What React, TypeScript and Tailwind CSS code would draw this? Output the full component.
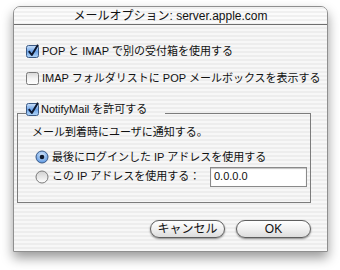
import React from 'react';

const font = "font-['Liberation_Sans','Noto_Sans_CJK_JP',sans-serif]";

const CheckBox: React.FC<{ checked?: boolean }> = ({ checked = false }) => (
  <svg width="14" height="14" viewBox="0 0 14 14" className="shrink-0">
    <defs>
      <linearGradient id="cbOn" x1="0" y1="0" x2="0" y2="1">
        <stop offset="0" stopColor="#cfe3fa" />
        <stop offset="0.5" stopColor="#6ea4e8" />
        <stop offset="1" stopColor="#b3d6f7" />
      </linearGradient>
      <linearGradient id="cbOff" x1="0" y1="0" x2="0" y2="1">
        <stop offset="0" stopColor="#d6d6d6" />
        <stop offset="0.5" stopColor="#f4f4f4" />
        <stop offset="1" stopColor="#ffffff" />
      </linearGradient>
    </defs>
    <rect x="0.5" y="1.5" width="12" height="12" rx="2" fill={checked ? 'url(#cbOn)' : 'url(#cbOff)'} stroke={checked ? '#3b5a86' : '#7a7a7a'} />
    {checked && <path d="M2.8 7.2 L5.8 11 L12 0.8" stroke="#0d1830" strokeWidth="2" fill="none" strokeLinejoin="round" />}
  </svg>
);

const Radio: React.FC<{ on?: boolean }> = ({ on = false }) => (
  <svg width="14" height="14" viewBox="0 0 14 14" className="shrink-0">
    <defs>
      <radialGradient id="rOn" cx="0.5" cy="0.35" r="0.7">
        <stop offset="0" stopColor="#d9eafc" />
        <stop offset="1" stopColor="#4f8fe0" />
      </radialGradient>
      <linearGradient id="rOff" x1="0" y1="0" x2="0" y2="1">
        <stop offset="0" stopColor="#d0d0d0" />
        <stop offset="1" stopColor="#ffffff" />
      </linearGradient>
    </defs>
    <circle cx="7" cy="7" r="6" fill={on ? 'url(#rOn)' : 'url(#rOff)'} stroke={on ? '#3b5a86' : '#7a7a7a'} />
    {on && <circle cx="7" cy="7" r="2.3" fill="#101a2c" />}
  </svg>
);

const Button: React.FC<{ label: string }> = ({ label }) => (
  <button className="w-[75px] h-[18px] rounded-full border border-[#5e5e5e] bg-[linear-gradient(to_bottom,#ffffff,#f0f0f0_50%,#dcdcdc)] shadow-[0_1px_2px_rgba(0,0,0,0.45)] text-[12px] leading-none text-[#111]">
    {label}
  </button>
);

export default function App() {
  return (
    <div className={`w-[340px] h-[270px] bg-white pt-[6px] pl-[13px] ${font}`}>
      <div className="w-[315px] h-[246px] flex flex-col rounded-t-[7px] border border-[#8f8f8f] shadow-[0_6px_12px_rgba(0,0,0,0.4)] overflow-hidden bg-[repeating-linear-gradient(to_bottom,#ededed_0px,#ededed_2px,#f7f7f7_2px,#f7f7f7_4px)]">
        <div className="h-[18px] shrink-0 flex items-center justify-center border-b border-[#6f6f6f] bg-[repeating-linear-gradient(to_bottom,#f0f0f0_0px,#f0f0f0_2px,#fbfbfb_2px,#fbfbfb_4px)] text-[12px] text-[#111]">
          メールオプション: server.apple.com
        </div>

        <div className="flex flex-col pl-[12px] pt-[19px] text-[11px] text-[#111] gap-[13px]">
          <label className="flex items-center gap-[2px] h-[14px]">
            <CheckBox checked />
            <span>POP と IMAP で別の受付箱を使用する</span>
          </label>
          <label className="flex items-center gap-[2px] h-[14px]">
            <CheckBox />
            <span>IMAP フォルダリストに POP メールボックスを表示する</span>
          </label>
        </div>

        <fieldset className="ml-[3px] mt-[16px] w-[294px] h-[102px] border border-[#7c7c7c] pl-[14px] text-[11px] text-[#111]">
          <legend className="-ml-[6px] pr-[18px] pb-[9px] flex items-center gap-[1px]">
            <CheckBox checked />
            <span>NotifyMail を許可する</span>
          </legend>
          <div className="-mt-[3px]">メール到着時にユーザに通知する。</div>
          <div className="mt-[9px] flex items-center gap-[3px] pl-[3px]">
            <Radio on />
            <span>最後にログインした IP アドレスを使用する</span>
          </div>
          <div className="mt-[1px] flex items-center pl-[3px]">
            <Radio />
            <span className="ml-[3px]">この IP アドレスを使用する：</span>
            <div className="ml-auto mr-[3px] w-[97px] h-[20px] bg-white border border-[#8a8a8a] shadow-[inset_0_1px_1px_rgba(0,0,0,0.25)] flex items-center pl-[3px] text-[11px]">
              0.0.0.0
            </div>
          </div>
        </fieldset>

        <div className="mt-[17px] flex justify-end gap-[11px] pr-[16px]">
          <Button label="キャンセル" />
          <Button label="OK" />
        </div>
      </div>
    </div>
  );
}
